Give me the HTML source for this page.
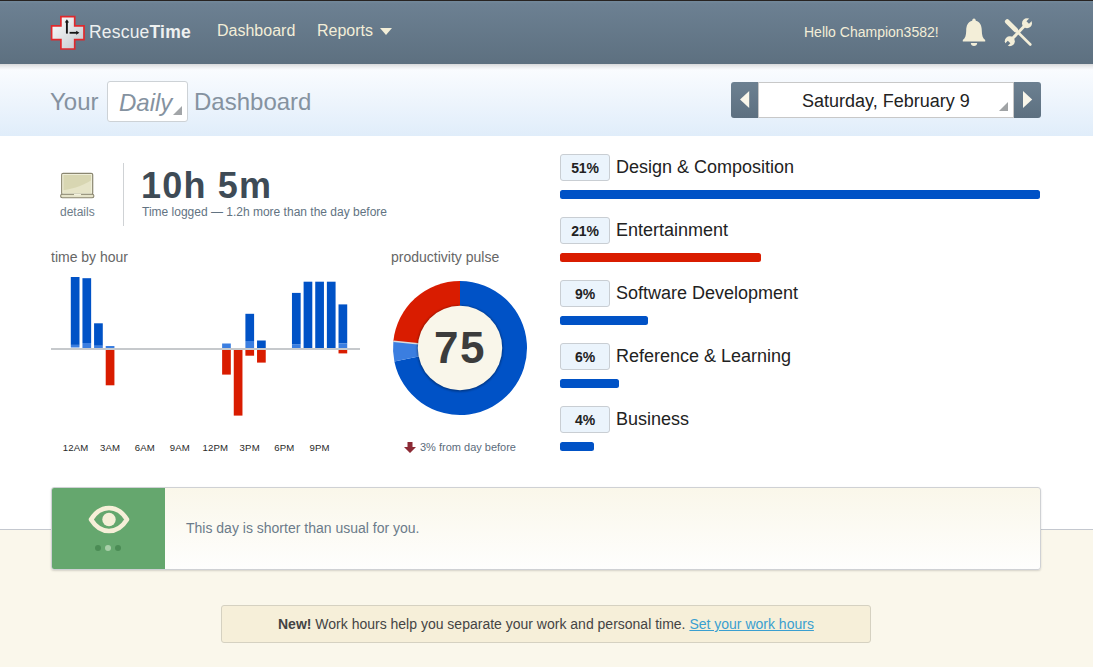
<!DOCTYPE html>
<html><head><meta charset="utf-8">
<style>
*{box-sizing:border-box;margin:0;padding:0}
html,body{width:1093px;height:667px;overflow:hidden}
body{font-family:"Liberation Sans",sans-serif;background:#faf7eb;position:relative}
.abs{position:absolute}
#top{left:0;top:0;width:1093px;height:530px;background:#fff;border-bottom:1px solid #c4c8cf}
#hdr{left:0;top:0;width:1093px;height:64px;background:linear-gradient(#72889a 0px,#6c8092 3px,#5d7080);border-top:1px solid #272321}
#hshadow{left:0;top:64px;width:1093px;height:6px;background:linear-gradient(rgba(0,0,0,.14),rgba(0,0,0,.06) 50%,rgba(0,0,0,0))}
#sub{left:0;top:64px;width:1093px;height:72px;background:linear-gradient(#fcfdff,#e0edfa)}
.nav{color:#f3eed8;font-size:16px;line-height:18px;white-space:nowrap}
.t{white-space:nowrap;line-height:1}
.lbl{top:442.6px;width:60px;text-align:center;font-size:9.6px;letter-spacing:0.15px;color:#2a2a2a}
.badge{left:560px;width:50px;height:27px;border:1px solid #c9ced3;border-radius:3px;background:#ebf4fc;font-size:14px;font-weight:bold;color:#222;text-align:center;line-height:27px;letter-spacing:-0.2px}
.cat{left:616px;font-size:18px;color:#222}
.bar{left:560px;height:9px;border-radius:2.5px}
</style></head><body>
<div id="top" class="abs"></div>
<div id="sub" class="abs"></div>
<div id="hdr" class="abs"></div>
<div id="hshadow" class="abs"></div>

<!-- logo -->
<svg class="abs" style="left:50px;top:15px" width="35" height="35" viewBox="0 0 35 35">
  <defs><linearGradient id="lg" x1="0" y1="0" x2="1" y2="1"><stop offset="0" stop-color="#ffffff"/><stop offset="1" stop-color="#c0c5ca"/></linearGradient></defs>
  <path d="M10.9 1.6h13.8v9.3h9.3v13.8h-9.3v9.3H10.9v-9.3H1.6V10.9h9.3z" fill="url(#lg)" stroke="#e0282c" stroke-width="1.7"/>
  <path d="M16.9 6v12.6" stroke="#151515" stroke-width="1.9"/>
  <path d="M14.8 7.6l2.1-3.3 2.1 3.3z" fill="#151515"/>
  <path d="M19.6 17.8h7.2" stroke="#151515" stroke-width="1.8"/>
  <path d="M26.2 15.8l3.2 2-3.2 2z" fill="#151515"/>
</svg>
<div class="abs t" style="left:89px;top:24px;font-size:17.5px;color:#eef0f0;letter-spacing:0.2px">Rescue<b>Time</b></div>

<div class="abs nav" style="left:217px;top:22px">Dashboard</div>
<div class="abs nav" style="left:317px;top:22px">Reports</div>
<svg class="abs" style="left:380px;top:28px" width="12" height="7"><path d="M0 0h12L6 7z" fill="#f3eed8"/></svg>

<div class="abs t" style="left:804px;top:25px;font-size:14px;color:#f3eed8">Hello Champion3582!</div>
<!-- bell -->
<svg class="abs" style="left:960px;top:17px" width="28" height="30" viewBox="0 0 28 30">
  <path d="M14 1.5c1.2 0 1.8 1 1.8 2.3 4.3 1 6 4.8 6 10 0 4.5 1 7.5 3.4 9.2v1.6H2.8v-1.6c2.4-1.7 3.4-4.7 3.4-9.2 0-5.2 1.7-9 6-10 0-1.3.6-2.3 1.8-2.3z" fill="#f3eed8"/>
  <path d="M10.8 26h6.4c0 1.8-1.4 3-3.2 3s-3.2-1.2-3.2-3z" fill="#f3eed8"/>
</svg>
<!-- tools -->
<svg class="abs" style="left:1003px;top:17px" width="32" height="31" viewBox="0 0 32 31">
  <defs><mask id="wm"><rect width="32" height="31" fill="#fff"/>
    <rect x="-1.8" y="-8" width="3.6" height="7" transform="translate(24,6.3) rotate(45)" fill="#000"/>
    <rect x="-1.8" y="-8" width="3.6" height="7" transform="translate(6.8,24.3) rotate(225)" fill="#000"/>
  </mask></defs>
  <g mask="url(#wm)">
    <circle cx="24" cy="6.3" r="5" fill="#f3eed8"/>
    <circle cx="6.8" cy="24.3" r="5" fill="#f3eed8"/>
    <path d="M6.8 24.3L24 6.3" stroke="#f3eed8" stroke-width="3"/>
  </g>
  <path d="M4.3 4.6L12.6 12.9" stroke="#f3eed8" stroke-width="4.8" stroke-linecap="round"/>
  <path d="M12.6 12.9L27.3 27.5" stroke="#f3eed8" stroke-width="2.6" stroke-linecap="round"/>
</svg>

<!-- title -->
<div class="abs t" style="left:50px;top:90px;font-size:24px;color:#8592a0">Your</div>
<div class="abs" style="left:107px;top:81px;width:81px;height:41px;border:1px solid #cdd2d6;border-radius:3px;background:#fff"></div>
<div class="abs t" style="left:119px;top:91px;font-size:24px;color:#8592a0;font-style:italic">Daily</div>
<svg class="abs" style="left:173px;top:106px" width="9" height="9"><path d="M9 0v9H0z" fill="#a2a5a8"/></svg>
<div class="abs t" style="left:194px;top:90px;font-size:24px;color:#8592a0">Dashboard</div>

<!-- date picker -->
<div class="abs" style="left:731px;top:82px;width:310px;height:36px;border-radius:3px;background:linear-gradient(#6c8091,#5d7080)"></div>
<div class="abs" style="left:758px;top:82px;width:256px;height:36px;background:#fff;border:1px solid #c8c8c8;border-width:1px 1px 1px 1px"></div>
<svg class="abs" style="left:740px;top:91px" width="10" height="17"><path d="M9.2 0v17L0 8.5z" fill="#f9f6ea"/></svg>
<svg class="abs" style="left:1023px;top:91px" width="10" height="17"><path d="M0 0v17l9.2-8.5z" fill="#f9f6ea"/></svg>
<svg class="abs" style="left:999px;top:102px" width="9" height="9"><path d="M9 0v9H0z" fill="#a0a3a5"/></svg>
<div class="abs t" style="left:802px;top:92px;font-size:18px;color:#222">Saturday, February 9</div>

<!-- time logged -->
<svg class="abs" style="left:55px;top:165px" width="45" height="36" viewBox="0 0 45 36">
  <rect x="6.7" y="8.3" width="31" height="21.4" rx="1.5" fill="#e6e4c8" stroke="#8a8670" stroke-width="1.2"/>
  <path d="M8.2 9.8h28.3v5.2C30 19.5 20 23.5 8.2 25.3z" fill="#d8d6b2"/>
  <rect x="7.9" y="9.5" width="28.6" height="19" fill="none" stroke="#f1f0de" stroke-width="0.8"/>
  <rect x="5.6" y="29.3" width="33.3" height="3.4" rx="1.7" fill="#e6e4ca" stroke="#8a8670" stroke-width="1.1"/>
  <rect x="19" y="29" width="7" height="1.3" fill="#f2f0dc"/>
</svg>
<div class="abs t" style="left:60px;top:206px;font-size:12px;color:#6d7c89">details</div>
<div class="abs" style="left:123px;top:163px;width:1px;height:63px;background:#cfd2d5"></div>
<div class="abs t" style="left:141px;top:168px;font-size:36px;font-weight:bold;letter-spacing:1.2px;color:#3e4b56">10h 5m</div>
<div class="abs t" style="left:142px;top:206px;font-size:12px;color:#627382">Time logged — 1.2h more than the day before</div>

<!-- time by hour -->
<div class="abs t" style="left:51px;top:250px;font-size:14px;color:#666">time by hour</div>
<svg class="abs" style="left:45px;top:270px" width="320" height="150"><rect x="6" y="78" width="309" height="2" fill="#c6c9cc"/><rect x="25.80" y="7.00" width="8.7" height="67.90" fill="#0052c6"/><rect x="25.80" y="74.90" width="8.7" height="2.60" fill="#3b7ee0"/><rect x="37.44" y="8.20" width="8.7" height="64.80" fill="#0052c6"/><rect x="37.44" y="73.00" width="8.7" height="5.00" fill="#3b7ee0"/><rect x="49.08" y="53.30" width="8.7" height="22.50" fill="#0052c6"/><rect x="49.08" y="75.80" width="8.7" height="2.20" fill="#3b7ee0"/><rect x="60.72" y="76.00" width="8.7" height="2.00" fill="#3b7ee0"/><rect x="60.72" y="80.00" width="8.7" height="35.30" fill="#d91c00"/><rect x="177.12" y="73.50" width="8.7" height="4.50" fill="#3b7ee0"/><rect x="177.12" y="80.00" width="8.7" height="24.60" fill="#d91c00"/><rect x="188.76" y="80.00" width="8.7" height="65.60" fill="#d91c00"/><rect x="200.40" y="43.80" width="8.7" height="27.20" fill="#0052c6"/><rect x="200.40" y="71.00" width="8.7" height="7.00" fill="#3b7ee0"/><rect x="200.40" y="80.00" width="8.7" height="5.70" fill="#d91c00"/><rect x="212.04" y="70.50" width="8.7" height="7.50" fill="#0052c6"/><rect x="212.04" y="80.00" width="8.7" height="12.60" fill="#d91c00"/><rect x="246.96" y="22.90" width="8.7" height="51.70" fill="#0052c6"/><rect x="246.96" y="74.60" width="8.7" height="3.40" fill="#3b7ee0"/><rect x="258.60" y="11.70" width="8.7" height="66.30" fill="#0052c6"/><rect x="270.24" y="11.70" width="8.7" height="66.30" fill="#0052c6"/><rect x="281.88" y="11.70" width="8.7" height="66.30" fill="#0052c6"/><rect x="293.52" y="34.40" width="8.7" height="39.10" fill="#0052c6"/><rect x="293.52" y="73.50" width="8.7" height="4.50" fill="#3b7ee0"/><rect x="293.52" y="80.00" width="8.7" height="3.40" fill="#d91c00"/></svg>
<div class="abs t lbl" style="left:45.5px">12AM</div><div class="abs t lbl" style="left:80.0px">3AM</div><div class="abs t lbl" style="left:114.9px">6AM</div><div class="abs t lbl" style="left:149.8px">9AM</div><div class="abs t lbl" style="left:185.3px">12PM</div><div class="abs t lbl" style="left:219.7px">3PM</div><div class="abs t lbl" style="left:254.4px">6PM</div><div class="abs t lbl" style="left:289.5px">9PM</div>

<!-- productivity pulse -->
<div class="abs t" style="left:391px;top:250px;font-size:14px;color:#666">productivity pulse</div>
<svg class="abs" style="left:392px;top:280px" width="136" height="136"><path d="M68,68L68.00,1.00A67,67 0 1 1 2.37,81.47Z" fill="#0052c6"/><path d="M68,68L2.37,81.47A67,67 0 0 1 1.34,61.23Z" fill="#3b7ee0"/><path d="M68,68L1.34,61.23A67,67 0 0 1 68.00,1.00Z" fill="#d91c00"/><path d="M28.20,63.96L1.34,61.23" stroke="#dcdcdc" stroke-width="1.4"/><defs><filter id="bl" x="-20%" y="-20%" width="140%" height="140%"><feGaussianBlur stdDeviation="1.3"/></filter></defs><circle cx="68" cy="68.5" r="43" fill="#000" opacity=".35" filter="url(#bl)"/><circle cx="68" cy="68" r="42.2" fill="#f9f6ea"/></svg>
<div class="abs t" style="left:434px;top:326px;font-size:44px;font-weight:bold;letter-spacing:1.6px;color:#3c3c3c">75</div>
<svg class="abs" style="left:404px;top:442px" width="13" height="11"><path d="M3.5 0h5v5H12L6 11 0 5h3.5z" fill="#8c2a35"/></svg>
<div class="abs t" style="left:420px;top:442px;font-size:11px;color:#5c6c7c">3% from day before</div>

<!-- categories -->
<div class="abs badge" style="top:154px">51%</div>
<div class="abs t cat" style="top:158px">Design &amp; Composition</div>
<div class="abs bar" style="top:190px;width:480px;background:#0052c6"></div>
<div class="abs badge" style="top:217px">21%</div>
<div class="abs t cat" style="top:221px">Entertainment</div>
<div class="abs bar" style="top:253px;width:201px;background:#d91c00"></div>
<div class="abs badge" style="top:280px">9%</div>
<div class="abs t cat" style="top:284px">Software Development</div>
<div class="abs bar" style="top:316px;width:88px;background:#0052c6"></div>
<div class="abs badge" style="top:343px">6%</div>
<div class="abs t cat" style="top:347px">Reference &amp; Learning</div>
<div class="abs bar" style="top:379px;width:59px;background:#0052c6"></div>
<div class="abs badge" style="top:406px">4%</div>
<div class="abs t cat" style="top:410px">Business</div>
<div class="abs bar" style="top:442px;width:34px;background:#0052c6"></div>

<!-- alert -->
<div class="abs" style="left:51px;top:487px;width:990px;height:83px;border:1px solid #cfd1d4;border-radius:3px;background:linear-gradient(#faf7ea,#fefefd);box-shadow:0 1px 2px rgba(0,0,0,.15)"></div>
<div class="abs" style="left:52px;top:488px;width:113px;height:81px;background:#65a76e;border-radius:2px 0 0 2px"></div>
<svg class="abs" style="left:84px;top:500px" width="50" height="54" viewBox="0 0 50 54">
  <path d="M7 19.5C12 11.5 18 8 25 8S38 11.5 43 19.5C38 27.5 32 31 25 31S12 27.5 7 19.5z" fill="none" stroke="#f6efd8" stroke-width="4.6" stroke-linejoin="round"/>
  <circle cx="25" cy="19.5" r="6.7" fill="#f6efd8"/>
  <circle cx="14" cy="48" r="3" fill="#4b8c55"/>
  <circle cx="24" cy="48" r="3" fill="#a9cfa9"/>
  <circle cx="34" cy="48" r="3" fill="#4b8c55"/>
</svg>
<div class="abs t" style="left:186px;top:521px;font-size:14px;color:#6b7b8a">This day is shorter than usual for you.</div>

<!-- new -->
<div class="abs" style="left:221px;top:605px;width:650px;height:38px;border:1px solid #d5d1c1;border-radius:3px;background:#f6efd9"></div>
<div class="abs t" style="left:278px;top:617px;font-size:14px;color:#444"><b>New!</b> Work hours help you separate your work and personal time. <span style="color:#3a9fd0;text-decoration:underline">Set your work hours</span></div>
</body></html>
